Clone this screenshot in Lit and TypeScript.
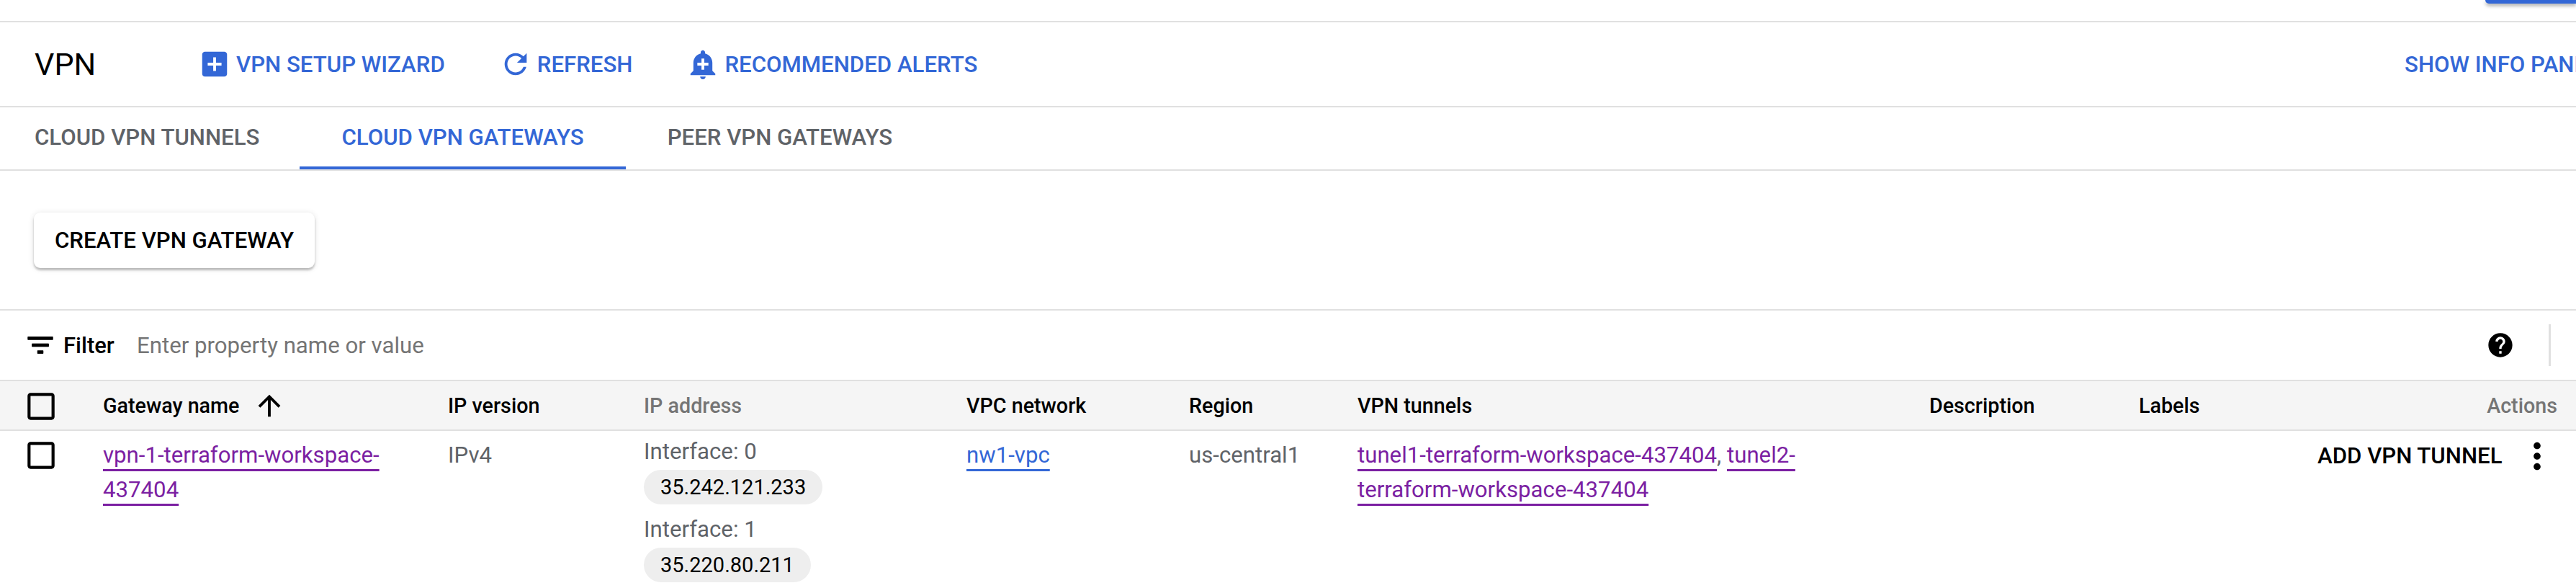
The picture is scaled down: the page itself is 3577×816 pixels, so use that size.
import { LitElement, html, css, svg } from "lit";
import { customElement } from "lit/decorators.js";

const icon = (d: string, cls: string) => html`<svg class=${cls} viewBox="0 0 24 24" fill="currentColor">${svg`<path d=${d}></path>`}</svg>`;
const P = {
  add: "M19 3H5c-1.11 0-2 .9-2 2v14c0 1.1.89 2 2 2h14c1.1 0 2-.9 2-2V5c0-1.1-.9-2-2-2zm-2 10h-4v4h-2v-4H7v-2h4V7h2v4h4v2z",
  refresh: "M17.65 6.35C16.2 4.9 14.21 4 12 4c-4.42 0-7.99 3.58-7.99 8s3.57 8 7.99 8c3.73 0 6.84-2.55 7.73-6h-2.08c-.82 2.33-3.04 4-5.65 4-3.31 0-6-2.69-6-6s2.69-6 6-6c1.66 0 3.14.69 4.22 1.78L13 11h7V4l-2.35 2.35z",
  alert: "M10.01 21.01c0 1.1.89 1.99 1.99 1.99s1.99-.89 1.99-1.99h-3.98zm8.87-4.19V11c0-3.25-2.25-5.97-5.29-6.69v-.72C13.59 2.71 12.88 2 12 2s-1.59.71-1.59 1.59v.72C7.37 5.03 5.12 7.75 5.12 11v5.82L3 18.94V20h18v-1.06l-2.12-2.12zM16 13.01h-3v3h-2v-3H8V11h3V8h2v3h3v2.01z",
  filter: "M10 18h4v-2h-4v2zM3 6v2h18V6H3zm3 7h12v-2H6v2z",
  up: "M4 12l1.41 1.41L11 7.83V20h2V7.83l5.58 5.59L20 12l-8-8-8 8z",
  check: "M19 5v14H5V5h14m0-2H5c-1.1 0-2 .9-2 2v14c0 1.1.9 2 2 2h14c1.1 0 2-.9 2-2V5c0-1.1-.9-2-2-2z",
  help: "M12 2C6.48 2 2 6.48 2 12s4.48 10 10 10 10-4.48 10-10S17.52 2 12 2zm1 17h-2v-2h2v2zm2.07-7.75l-.9.92C13.45 12.9 13 13.5 13 15h-2v-.5c0-1.1.45-2.1 1.17-2.83l1.24-1.26c.37-.36.59-.86.59-1.41 0-1.1-.9-2-2-2s-2 .9-2 2H8c0-2.21 1.79-4 4-4s4 1.79 4 4c0 .88-.36 1.68-.93 2.25z",
  more: "M12 8c1.1 0 2-.9 2-2s-.9-2-2-2-2 .9-2 2 .9 2 2 2zm0 2c-1.1 0-2 .9-2 2s.9 2 2 2 2-.9 2-2-.9-2-2-2zm0 6c-1.1 0-2 .9-2 2s.9 2 2 2 2-.9 2-2-.9-2-2-2z",
};

@customElement("app-root")
export class AppRoot extends LitElement {
  static styles = css`
    :host { display: block; width: 3577px; height: 816px; overflow: hidden; background: #fff; color: #000; font-family: Roboto, "Liberation Sans", sans-serif; font-size: 31.2px; }
    svg { display: block; flex: none; }
    .top { height: 29px; display: flex; justify-content: flex-end; border-bottom: 2px solid #e0e0e0; }
    .top-btn { width: 126px; height: 5px; background: #3367d6; border-radius: 0 0 0 8px; box-shadow: 0 3px 5px rgba(0,0,0,.35); }
    .toolbar { height: 116px; display: flex; align-items: center; border-bottom: 2px solid #e0e0e0; padding-left: 48px; color: #3367d6; font-weight: 500; font-size: 31.2px; }
    .title { width: 233px; color: #000; font-weight: 400; font-size: 43px; }
    .action { display: flex; align-items: center; gap: 7px; }
    .i46 { width: 46px; height: 46px; margin-left: -6px; }
    .i46f { width: 46px; height: 46px; stroke: currentColor; stroke-width: .45; }
    .wizard { margin-right: 81px; }
    .refresh { margin-right: 81px; }
    .info { margin-left: auto; width: 238px; white-space: nowrap; overflow: hidden; flex: none; }
    .tabs { height: 86px; display: flex; border-bottom: 2px solid #e0e0e0; color: #5f6368; font-weight: 500; font-size: 31.2px; }
    .tab { display: flex; align-items: center; padding: 0 58px; height: 86px; box-sizing: border-box; border-bottom: 4px solid transparent; }
    .tab.first { padding-left: 48px; padding-right: 56px; }
    .tab.active { color: #3367d6; border-bottom-color: #3367d6; }
    .create { height: 192px; display: flex; align-items: center; padding-left: 47px; border-bottom: 2px solid #e0e0e0; }
    .create-btn { width: 390px; height: 77px; display: flex; align-items: center; justify-content: center; background: #fff; border-radius: 9px; font-weight: 500; box-shadow: 0 3px 3px rgba(0,0,0,.22), 0 1px 8px rgba(0,0,0,.12); }
    .filter { height: 96px; display: flex; align-items: center; padding-left: 33px; }
    .filter-label { font-weight: 500; margin-left: 9px; width: 102px; font-size: 31px; }
    .placeholder { color: #757575; }
    .help { width: 40px; height: 40px; margin-left: auto; }
    .divider { width: 3px; height: 58px; background: #e0e0e0; margin: 0 35px 0 47px; }
    .grid { display: grid; grid-template-columns: 143px 479px 272px 448px 309px 234px 794px 291px 248px 359px; }
    .head { height: 67px; background: #f5f5f5; border-top: 2px solid #e0e0e0; border-bottom: 2px solid #e0e0e0; align-items: center; font-weight: 500; font-size: 28.7px; }
    .head .muted { color: #757575; }
    .head-check { padding-top: 3px; }
    .sort { display: flex; align-items: center; }
    .sort svg { margin-left: 19px; }
    .right { text-align: right; padding-right: 26px; }
    .check { width: 50px; height: 50px; margin-left: 32px; }
    .row { color: #5f6368; line-height: 48px; }
    .cell { padding: 10px 32px 0 0; box-sizing: border-box; }
    .check-cell { padding-top: 9px; color: #000; }
    .tunnels { padding-right: 100px; }
    a { text-decoration: underline; text-decoration-thickness: 3px; text-underline-offset: 9px; text-decoration-skip-ink: none; color: #7b1fa2; }
    a.blue { color: #3367d6; }
    .iface { line-height: 36px; position: relative; top: 1px; }
    .chip { display: table; height: 48px; line-height: 48px; padding: 0 23px; background: #eee; border-radius: 24px; color: #000; margin-top: 8px; margin-bottom: 16px; font-size: 29px; }
    .iface-cell { padding-right: 0; }
    .actions { display: flex; align-items: center; color: #000; font-weight: 500; padding: 6px 0 0 0; height: 58px; }
    .more { width: 58px; height: 58px; margin-left: 20px; }
  `;

  render() {
    return html`
      <div class="top"><div class="top-btn"></div></div>
      <div class="toolbar">
        <div class="title">VPN</div>
        <div class="action wizard">${icon(P.add, "i46")}<span>VPN SETUP WIZARD</span></div>
        <div class="action refresh">${icon(P.refresh, "i46")}<span>REFRESH</span></div>
        <div class="action">${icon(P.alert, "i46")}<span>RECOMMENDED ALERTS</span></div>
        <div class="info">SHOW INFO PANEL</div>
      </div>
      <div class="tabs">
        <div class="tab first">CLOUD VPN TUNNELS</div>
        <div class="tab active">CLOUD VPN GATEWAYS</div>
        <div class="tab">PEER VPN GATEWAYS</div>
      </div>
      <div class="create"><div class="create-btn">CREATE VPN GATEWAY</div></div>
      <div class="filter">
        ${icon(P.filter, "i46f")}
        <div class="filter-label">Filter</div>
        <div class="placeholder">Enter property name or value</div>
        ${icon(P.help, "help")}
        <div class="divider"></div>
      </div>
      <div class="grid head">
        <div class="head-check">${icon(P.check, "check")}</div>
        <div class="sort"><span>Gateway name</span>${icon(P.up, "i46")}</div>
        <div>IP version</div>
        <div class="muted">IP address</div>
        <div>VPC network</div>
        <div>Region</div>
        <div>VPN tunnels</div>
        <div>Description</div>
        <div>Labels</div>
        <div class="muted right">Actions</div>
      </div>
      <div class="grid row">
        <div class="cell check-cell">${icon(P.check, "check")}</div>
        <div class="cell"><a>vpn-1-terraform-workspace-437404</a></div>
        <div class="cell">IPv4</div>
        <div class="cell iface-cell">
          <div class="iface">Interface: 0</div>
          <div class="chip">35.242.121.233</div>
          <div class="iface">Interface: 1</div>
          <div class="chip">35.220.80.211</div>
        </div>
        <div class="cell"><a class="blue">nw1-vpc</a></div>
        <div class="cell">us-central1</div>
        <div class="cell tunnels"><a>tunel1-terraform-workspace-437404</a>, <a>tunel2-terraform-workspace-437404</a></div>
        <div class="cell"></div>
        <div class="cell"></div>
        <div class="actions"><span>ADD VPN TUNNEL</span>${icon(P.more, "more")}</div>
      </div>
    `;
  }
}
